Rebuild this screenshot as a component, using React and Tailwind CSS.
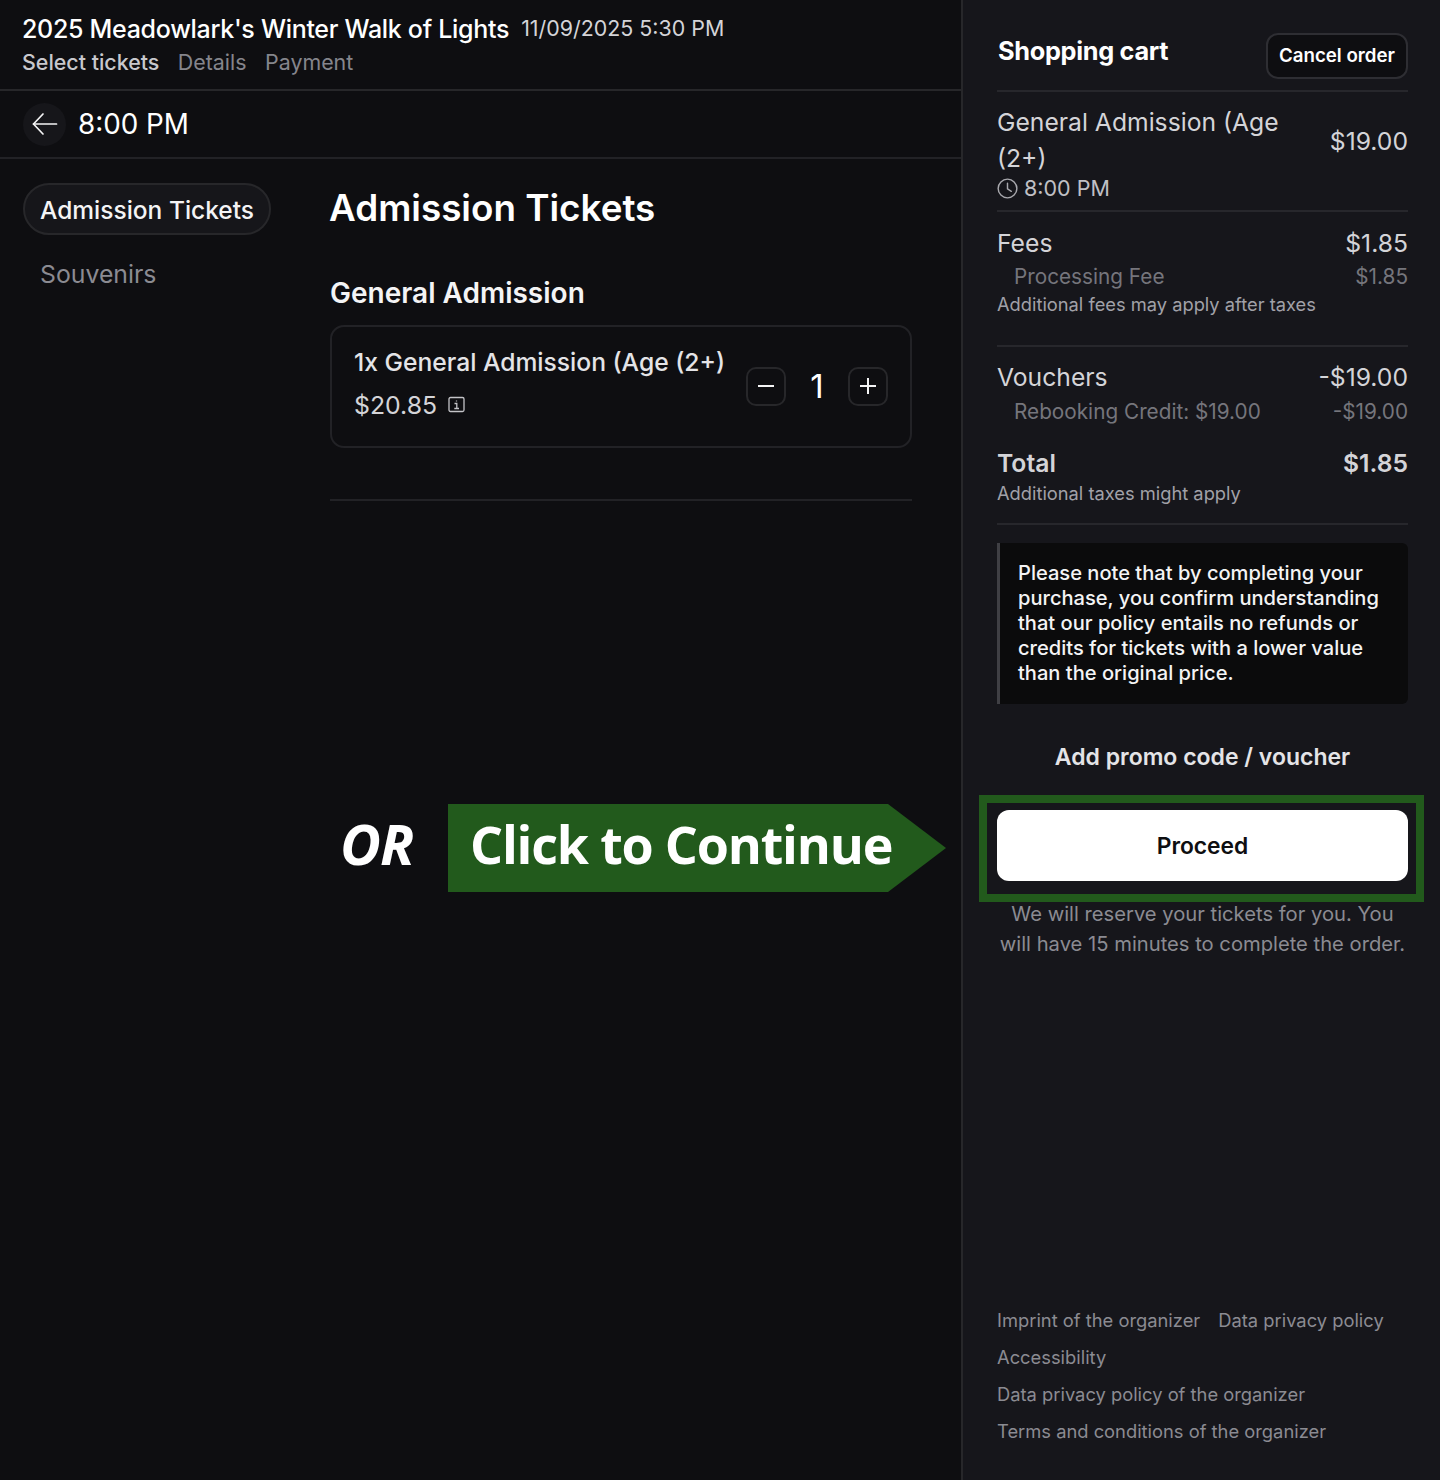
import React from "react";

function Row({ left, right, leftCls, rightCls }) {
  return (
    <div className="flex justify-between items-center">
      <span className={leftCls}>{left}</span>
      <span className={rightCls}>{right}</span>
    </div>
  );
}

export default function App() {
  return (
    <div className="flex w-[1440px] h-[1480px] bg-[#0e0e11] font-['Inter',sans-serif] overflow-hidden">
      <div className="relative w-[961px] shrink-0">
        <header className="h-[91px] border-b-2 border-[#27272a] pl-[22px] pt-[12px]">
          <div className="flex items-start gap-[12px] h-[34px]">
            <span className="text-[25px] leading-[34px] font-medium text-white tracking-[-0.3px]">2025 Meadowlark's Winter Walk of Lights</span>
            <span className="text-[21.4px] leading-[32px] text-[#d4d4d8]">11/09/2025 5:30 PM</span>
          </div>
          <nav className="flex gap-[18.5px] text-[21.4px] leading-[30px] mt-[1px]">
            <span className="font-medium text-[#c8c8cd]">Select tickets</span>
            <span className="text-[#85858c]">Details</span>
            <span className="text-[#85858c]">Payment</span>
          </nav>
        </header>
        <div className="h-[68px] border-b-2 border-[#222226] flex items-center pl-[23px] gap-[12px]">
          <button className="w-[43px] h-[43px] rounded-full bg-[#16161a] flex items-center justify-center">
            <svg width="28" height="24" viewBox="0 0 28 24" fill="none" stroke="#f4f4f5" strokeWidth="1.7" strokeLinecap="round" strokeLinejoin="round">
              <path d="M2.5 12H25.5" />
              <path d="M12 2L2.5 12L12 22" />
            </svg>
          </button>
          <span className="text-[27.8px] text-white leading-none pt-[2px]">8:00 PM</span>
        </div>
        <div className="flex pt-[24px]">
          <aside className="w-[330px] pl-[23px]">
            <div className="w-[248px] h-[52px] rounded-full border-2 border-[#27272a] bg-[#16161a] flex items-center pl-[15px] pt-[3px] text-[24.5px] font-medium text-[#f4f4f5]">Admission Tickets</div>
            <div className="pl-[17px] mt-[21px] text-[24.8px] leading-[36px] text-[#8b8b92]">Souvenirs</div>
          </aside>
          <main className="w-[582px]">
            <h1 className="text-[36.8px] leading-[50px] font-semibold text-white -ml-px">Admission Tickets</h1>
            <h2 className="text-[28px] leading-[40px] font-semibold text-[#f4f4f5] mt-[40px]">General Admission</h2>
            <div className="mt-[12px] h-[123px] rounded-[14px] border-2 border-[#222226] pl-[22px] pr-[22px] flex items-center justify-between">
              <div className="-mt-[7px]">
                <div className="text-[24.65px] leading-[36px] font-medium text-[#e4e4e7]">1x General Admission (Age (2+)</div>
                <div className="flex items-center gap-[11px] mt-[7px]">
                  <span className="text-[24.8px] leading-[36px] text-[#d4d4d8]">$20.85</span>
                  <svg width="17" height="17" viewBox="0 0 17 17" fill="none" stroke="#c4c4c8" strokeWidth="1.3">
                    <rect x="1" y="1.5" width="15" height="14" rx="1.5" />
                    <path d="M6.5 7.5H8.8V12.5M6.3 12.5H11M8.5 4.5V5.5" />
                  </svg>
                </div>
              </div>
              <div className="flex items-center -mt-[1px]">
                <button className="w-[40px] h-[39px] rounded-[10px] border-2 border-[#27272a] flex items-center justify-center">
                  <svg width="16" height="2"><rect width="16" height="2" fill="#f4f4f5" /></svg>
                </button>
                <span className="w-[62px] text-center text-[33px] leading-none text-white">1</span>
                <button className="w-[40px] h-[39px] rounded-[10px] border-2 border-[#27272a] flex items-center justify-center">
                  <svg width="16" height="16" fill="#f4f4f5"><rect y="7" width="16" height="2" /><rect x="7" width="2" height="16" /></svg>
                </button>
              </div>
            </div>
            <div className="mt-[51px] h-[2px] bg-[#222226]" />
          </main>
        </div>
        <div className="absolute left-[340px] top-[804px] flex items-start">
          <span className="w-[108px] text-[56px] leading-[78px] font-['Open_Sans',sans-serif] font-bold italic text-white tracking-[-1px]">OR</span>
          <div className="w-[498px] h-[88px] bg-[#225a1c] pl-[22px] [clip-path:polygon(0_0,440px_0,498px_44px,440px_88px,0_88px)] text-[52px] leading-[80px] font-['Open_Sans',sans-serif] font-bold text-white tracking-[-1.2px] whitespace-nowrap">Click to Continue</div>
        </div>
      </div>

      <aside className="w-[479px] shrink-0 bg-[#16161b] border-l-2 border-[#27272a] pl-[34px] pr-[32px] flex flex-col">
        <div className="h-[92px] border-b-2 border-[#27272c] flex justify-between pt-[33px]">
          <h2 className="text-[25.3px] leading-[36px] font-bold text-white tracking-[-0.3px] pl-px">Shopping cart</h2>
          <button className="w-[142px] h-[46px] rounded-[12px] border-2 border-[#2e2e33] bg-[#0e0e11] text-[18.7px] font-semibold text-white">Cancel order</button>
        </div>
        <div className="h-[120px] border-b-2 border-[#27272c] flex justify-between pt-[12px]">
          <div className="w-[300px]">
            <div className="text-[24.7px] leading-[36px] text-[#d4d4d8]">General Admission (Age (2+)</div>
            <div className="flex items-center gap-[6px] text-[21.5px] leading-[26px] text-[#c0c0c5] -mt-[1px]">
              <svg width="21" height="21" viewBox="0 0 22 22" fill="none" stroke="#a8a8ad" strokeWidth="1.5" strokeLinecap="round">
                <circle cx="11" cy="11" r="9.8" />
                <path d="M11 5.5V11.5L15 14" />
              </svg>
              8:00 PM
            </div>
          </div>
          <span className="text-[24.7px] leading-[36px] text-[#d4d4d8] mt-[19px]">$19.00</span>
        </div>
        <div className="h-[135px] border-b-2 border-[#27272c] pt-[13px]">
          <Row left="Fees" right="$1.85" leftCls="text-[24.7px] leading-[36px] text-[#d4d4d8]" rightCls="text-[24.7px] leading-[36px] text-[#d4d4d8]" />
          <div className="mt-px">
            <Row left="Processing Fee" right="$1.85" leftCls="pl-[17px] text-[20.75px] leading-[30px] text-[#75757c]" rightCls="text-[20.75px] leading-[30px] text-[#75757c]" />
          </div>
          <div className="text-[18.3px] leading-[26px] text-[#a1a1a8] -mt-px">Additional fees may apply after taxes</div>
        </div>
        <div className="pt-[12px]">
          <Row left="Vouchers" right="-$19.00" leftCls="text-[24.7px] leading-[36px] text-[#d4d4d8]" rightCls="text-[24.7px] leading-[36px] text-[#d4d4d8]" />
          <div className="mt-[2px]">
            <Row left="Rebooking Credit: $19.00" right="-$19.00" leftCls="pl-[17px] text-[20.75px] leading-[30px] text-[#75757c]" rightCls="text-[20.75px] leading-[30px] text-[#75757c]" />
          </div>
        </div>
        <div className="h-[98px] border-b-2 border-[#27272c] pt-[18px]">
          <Row left="Total" right="$1.85" leftCls="text-[24.7px] leading-[36px] font-semibold text-[#d4d4d8]" rightCls="text-[24.7px] leading-[36px] font-semibold text-[#d4d4d8]" />
          <div className="text-[18.3px] leading-[26px] text-[#a1a1a8] -mt-[1px]">Additional taxes might apply</div>
        </div>
        <div className="mt-[18px] h-[161px] rounded-r-[6px] bg-[#0b0b0c] border-l-[3px] border-[#3f3f44] pl-[18px] pr-[11px] pt-[18px] text-[20.1px] leading-[25px] font-medium text-[#f4f4f5]">
          Please note that by completing your purchase, you confirm understanding that our policy entails no refunds or credits for tickets with a lower value than the original price.
        </div>
        <div className="mt-[35px] text-center text-[23px] leading-[36px] font-semibold text-[#e4e4e7]">Add promo code / voucher</div>
        <div className="relative mt-[35px]">
          <button className="w-full h-[71px] rounded-[12px] bg-white pt-[1px] text-[22.8px] font-semibold text-[#0e0e11]">Proceed</button>
          <div className="absolute -left-[18px] -right-[16px] -top-[15px] -bottom-[21px] border-[8px] border-[#225a1c]" />
        </div>
        <div className="mt-[17px] pt-px text-center text-[20.2px] leading-[30px] text-[#8b8b92]">We will reserve your tickets for you. You will have 15 minutes to complete the order.</div>
        <footer className="mt-auto pb-[30px] text-[18.33px] leading-[37px] text-[#8b8b92]">
          <div className="flex gap-[18px]"><span>Imprint of the organizer</span><span>Data privacy policy</span></div>
          <div>Accessibility</div>
          <div>Data privacy policy of the organizer</div>
          <div>Terms and conditions of the organizer</div>
        </footer>
      </aside>
    </div>
  );
}
